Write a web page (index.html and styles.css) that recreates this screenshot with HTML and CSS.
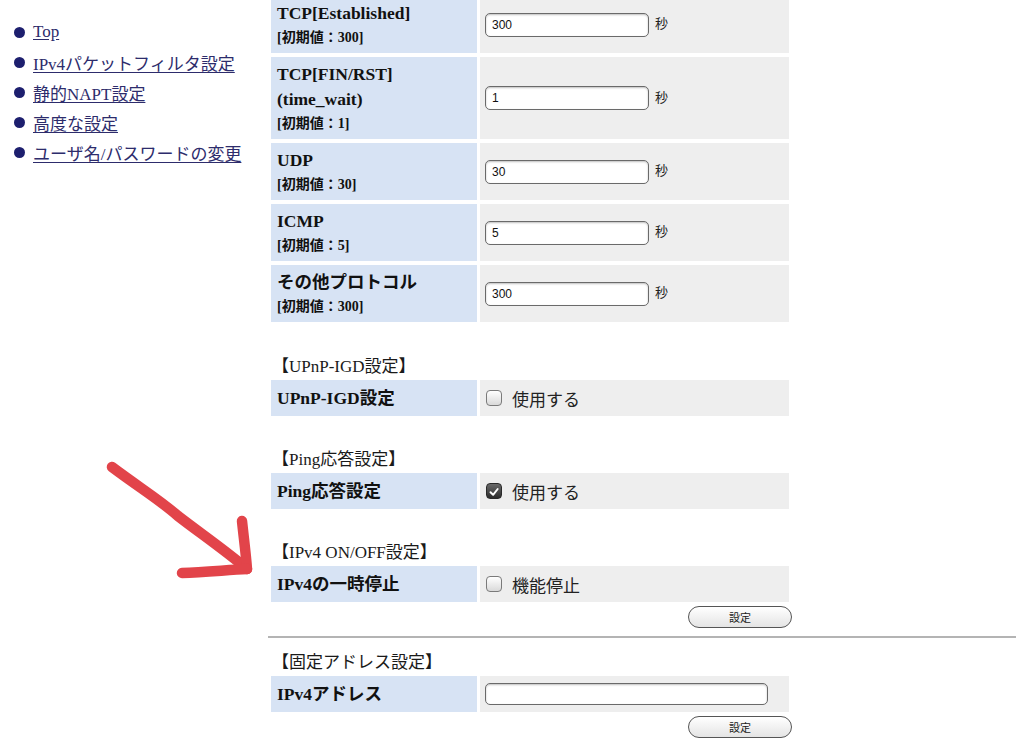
FILE: index.html
```html
<!DOCTYPE html>
<html lang="ja">
<head>
<meta charset="utf-8">
<title>設定</title>
<link rel="stylesheet" href="styles.css">
</head>
<body>
<div class="page">
  <nav class="nav">
    <ul>
      <li><a href="#">Top</a></li>
      <li><a href="#">IPv4パケットフィルタ設定</a></li>
      <li><a href="#">静的NAPT設定</a></li>
      <li><a href="#">高度な設定</a></li>
      <li><a href="#">ユーザ名/パスワードの変更</a></li>
    </ul>
  </nav>
  <main class="main">
    <table class="form first">
      <tr>
        <th><div class="lbl">TCP[Established]</div><div class="init">[初期値：300]</div></th>
        <td><input class="num" type="text" value="300"><span class="unit">秒</span></td>
      </tr>
      <tr>
        <th><div class="lbl">TCP[FIN/RST]</div><div class="lbl">(time_wait)</div><div class="init">[初期値：1]</div></th>
        <td><input class="num" type="text" value="1"><span class="unit">秒</span></td>
      </tr>
      <tr>
        <th><div class="lbl">UDP</div><div class="init">[初期値：30]</div></th>
        <td><input class="num" type="text" value="30"><span class="unit">秒</span></td>
      </tr>
      <tr>
        <th><div class="lbl">ICMP</div><div class="init">[初期値：5]</div></th>
        <td><input class="num" type="text" value="5"><span class="unit">秒</span></td>
      </tr>
      <tr>
        <th><div class="lbl">その他プロトコル</div><div class="init">[初期値：300]</div></th>
        <td><input class="num" type="text" value="300"><span class="unit">秒</span></td>
      </tr>
    </table>

    <h2 class="sec">【UPnP-IGD設定】</h2>
    <table class="form single">
      <tr>
        <th>UPnP-IGD設定</th>
        <td><label class="chk"><span class="box"></span>使用する</label></td>
      </tr>
    </table>

    <h2 class="sec sec-tight">【Ping応答設定】</h2>
    <table class="form single">
      <tr>
        <th>Ping応答設定</th>
        <td><label class="chk"><span class="box on"><svg viewBox="0 0 16 16" width="16" height="16"><path d="M4 8.3 L7 11.2 L12.2 4.6" fill="none" stroke="#fff" stroke-width="2.2" stroke-linecap="round" stroke-linejoin="round"/></svg></span>使用する</label></td>
      </tr>
    </table>

    <h2 class="sec sec-tight">【IPv4 ON/OFF設定】</h2>
    <table class="form single">
      <tr>
        <th>IPv4の一時停止</th>
        <td><label class="chk"><span class="box"></span>機能停止</label></td>
      </tr>
    </table>
    <div class="actions"><button class="btn" type="button">設定</button></div>

    <hr class="rule">

    <h2 class="sec sec-after-rule">【固定アドレス設定】</h2>
    <table class="form single">
      <tr>
        <th>IPv4アドレス</th>
        <td><input class="addr" type="text" value=""></td>
      </tr>
    </table>
    <div class="actions"><button class="btn" type="button">設定</button></div>
  </main>
</div>
<svg class="arrow" width="160" height="130" viewBox="100 455 160 130" aria-hidden="true">
  <path d="M112 467 C 140 488, 160 500, 178 516 C 200 533, 222 548, 246 568" fill="none" stroke="#e2444a" stroke-width="10.5" stroke-linecap="round" stroke-linejoin="round"/>
  <path d="M242 521 C 244 540, 246 555, 247 569" fill="none" stroke="#e2444a" stroke-width="10.5" stroke-linecap="round"/>
  <path d="M182 573 C 205 572, 228 570, 247 569" fill="none" stroke="#e2444a" stroke-width="10.5" stroke-linecap="round"/>
</svg>
</body>
</html>
```

FILE: styles.css
```css
html, body {
  margin: 0;
  padding: 0;
  background: #ffffff;
}

body {
  position: relative;
  font-family: "Liberation Serif", "Noto Sans CJK JP", serif;
  color: #1a1a1a;
  width: 1024px;
  height: 745px;
  overflow: hidden;
}

.page {
  display: flex;
  align-items: flex-start;
}

.nav {
  width: 268px;
  flex: none;
}

.nav ul {
  list-style: none;
  margin: 0;
  padding: 17px 0 0 14px;
}

.nav li {
  display: flex;
  align-items: center;
  gap: 8px;
  height: 30px;
  font-size: 17px;
}

.nav li::before {
  content: "";
  width: 11px;
  height: 11px;
  border-radius: 50%;
  background: #1d1f6e;
  flex: none;
}

.nav a {
  color: #2d2c6c;
  text-decoration: underline;
  text-underline-offset: 2px;
}

.main {
  flex: 1;
  padding-right: 8px;
}

.form {
  border-collapse: separate;
  border-spacing: 3px 4px;
  width: 524px;
  table-layout: fixed;
}

.form.first {
  margin-top: -8px;
}

.form th {
  width: 195px;
  background: #d7e3f4;
  text-align: left;
  vertical-align: middle;
  padding: 5px 5px 4px 6px;
  font-weight: bold;
  font-size: 17.5px;
  line-height: 24px;
  color: #111;
}

.form td {
  background: #eeeeee;
  vertical-align: middle;
  padding: 0 5px;
  font-size: 13px;
}

.form.single th,
.form.single td {
  height: 36px;
  padding-top: 0;
  padding-bottom: 0;
}

.lbl {
  font-size: 17.5px;
  line-height: 25px;
}

.init {
  font-size: 14px;
  line-height: 23px;
  font-weight: bold;
}

.num,
.addr {
  box-sizing: border-box;
  height: 24px;
  border: 1px solid #6a6a6a;
  border-radius: 5px;
  background: #ffffff;
  box-shadow: inset 0 1px 2px rgba(0, 0, 0, 0.25);
  font-family: "Liberation Sans", "Noto Sans CJK JP", sans-serif;
  font-size: 12px;
  padding: 0 6px;
  vertical-align: middle;
  color: #111;
}

.num {
  width: 164px;
}

.addr {
  width: 283px;
  height: 22px;
}

.unit {
  display: inline-block;
  margin-left: 6px;
  font-size: 13px;
  vertical-align: middle;
  position: relative;
  top: -2px;
  color: #222;
}

.chk {
  display: flex;
  align-items: center;
  gap: 10px;
  font-size: 17px;
  color: #222;
  padding-left: 1px;
}

.box {
  width: 16px;
  height: 16px;
  box-sizing: border-box;
  border: 1px solid #7a7a7a;
  border-radius: 4px;
  background: linear-gradient(#ffffff, #d9d9d9);
  display: flex;
  flex: none;
}

.box.on {
  border-color: #2a2a2a;
  background: linear-gradient(#6a6a6a, #2c2c2c);
}

.sec {
  margin: 32px 0 0 0;
  padding-left: 4px;
  font-size: 17px;
  font-weight: normal;
  line-height: 18px;
  color: #1a1a1a;
}

.sec-tight {
  margin-top: 31px;
}

.actions {
  width: 524px;
  display: flex;
  justify-content: flex-end;
}

.btn {
  width: 104px;
  height: 22px;
  border: 1px solid #555;
  border-radius: 11px;
  background: linear-gradient(#ffffff, #e4e4e4);
  font-family: "Noto Sans CJK JP", sans-serif;
  font-size: 11px;
  color: #222;
  padding: 0;
}

.rule {
  margin: 8px 0 0 0;
  border: 0;
  border-top: 2px solid #b4b4b4;
  height: 0;
}

.sec-after-rule {
  margin-top: 16px;
}

.arrow {
  position: absolute;
  left: 100px;
  top: 455px;
  pointer-events: none;
}
```
